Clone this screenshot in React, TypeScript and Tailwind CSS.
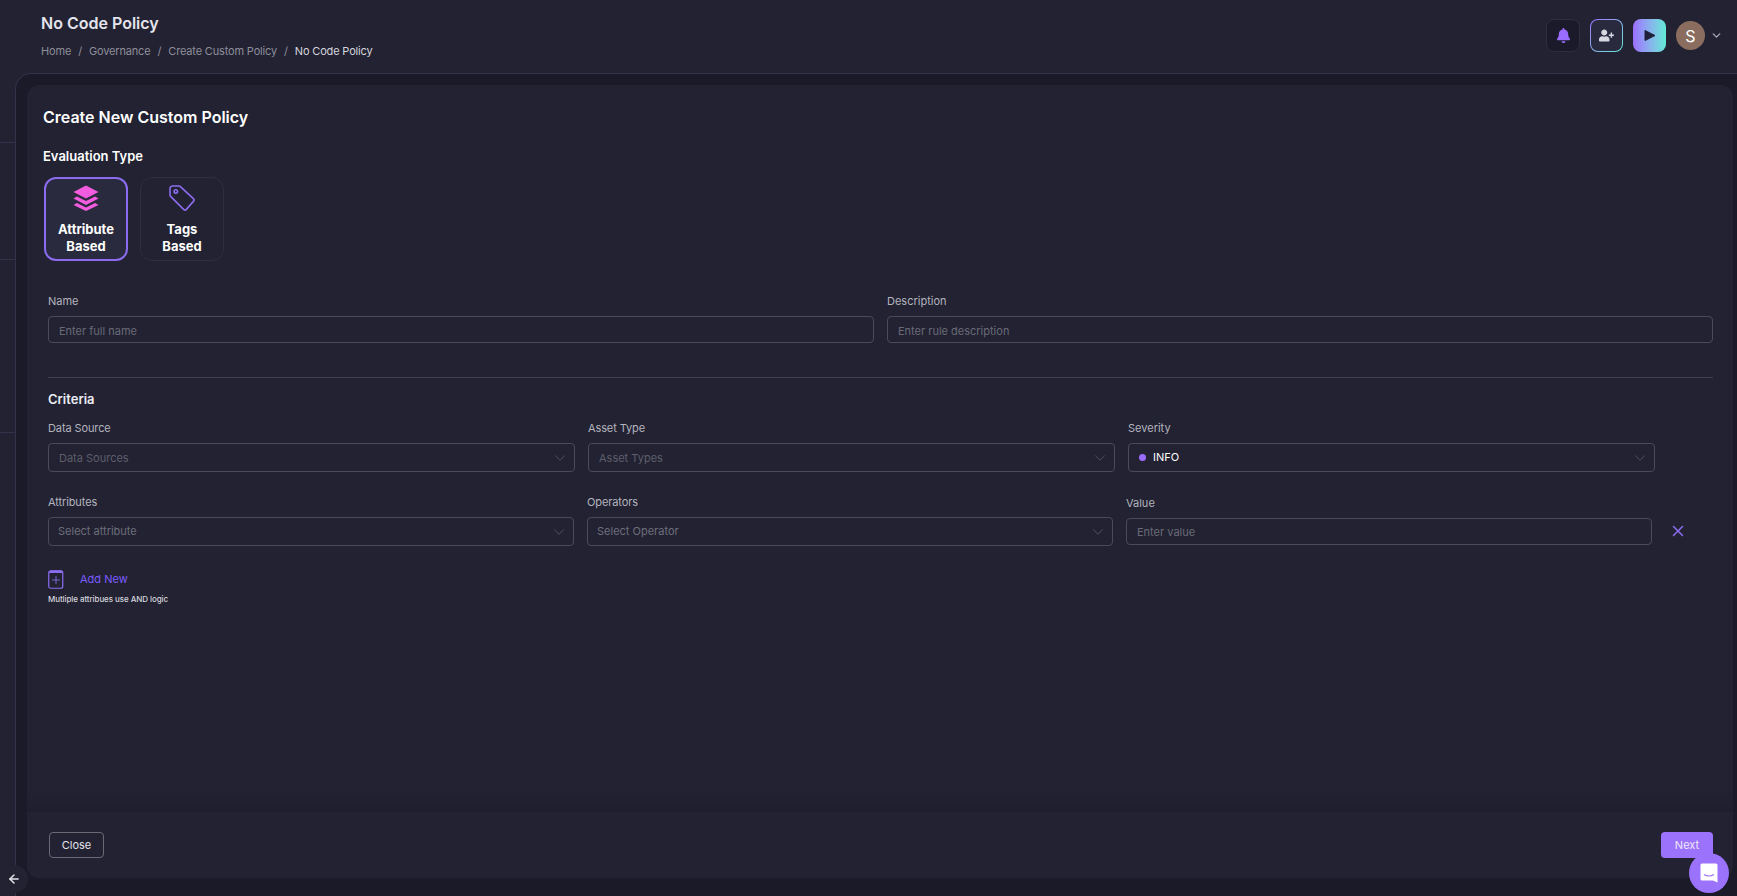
import { ChevronDown, X, ArrowLeft } from 'lucide-react'
import { FaBell, FaUserPlus } from 'react-icons/fa'

const font = { fontFamily: 'Inter, "Noto Sans", sans-serif' }

function Field({ label, placeholder, width, labelClass = '', nudge = 'pt-[2px]' }: { label: string; placeholder: string; width: string; labelClass?: string; nudge?: string }) {
  return (
    <div className={width}>
      <div className={`text-[11px] leading-4 text-[#b4b4bd] mb-[7px] ${labelClass}`}>{label}</div>
      <div className={`h-[27px] rounded border border-[#4a4a58] px-[10px] ${nudge} flex items-center text-[11px] text-[#6a6a76]`}>{placeholder}</div>
    </div>
  )
}

function SelectBox({ label, placeholder, width, indent = 'pl-[10px]', tone = 'text-[#6e6e7a]', nudge = 'pt-px' }: { label: string; placeholder: string; width: string; indent?: string; tone?: string; nudge?: string }) {
  return (
    <div className={width}>
      <div className="text-[11px] leading-4 tracking-[-0.01em] text-[#b4b4bd] mb-[7px]">{label}</div>
      <div className={`h-[29px] rounded border border-[#4a4a58] ${indent} pr-[5px] flex items-center justify-between text-[11px] ${tone}`}>
        <span className={nudge}>{placeholder}</span>
        <ChevronDown size={18} strokeWidth={0.9} className="mt-px text-[#686874]" />
      </div>
    </div>
  )
}

export default function App() {
  return (
    <div style={font} className="h-screen w-full overflow-hidden bg-[#222233] flex flex-col">
      <header className="h-[73px] shrink-0 flex items-start justify-between pl-[41px] pr-[14px]">
        <div className="pt-[12px]">
          <h1 className="text-base leading-[22px] font-semibold text-[#e4e4ec]">No Code Policy</h1>
          <div className="mt-[9px] flex items-center gap-[7px] text-[11px] leading-4 tracking-[-0.015em] text-[#8e8e98]">
            <span>Home</span>
            <span>/</span>
            <span>Governance</span>
            <span>/</span>
            <span>Create Custom Policy</span>
            <span>/</span>
            <span className="text-[#d6d6dc]">No Code Policy</span>
          </div>
        </div>
        <div className="pt-[19px] flex items-start">
          <div className="w-[34px] h-[33px] rounded-lg bg-[#1a1a2a] border border-[#2e2e40] flex items-center justify-center">
            <FaBell size={15} className="text-[#9b6dff]" />
          </div>
          <div className="ml-[10px] w-[33px] h-[33px] rounded-lg p-px bg-gradient-to-br from-[#9b6dff] to-[#5eead4]">
            <div className="w-full h-full rounded-[7px] bg-[#2a2a3e] flex items-center justify-center">
              <FaUserPlus size={15} className="text-[#d8d8e0]" />
            </div>
          </div>
          <div className="ml-[10px] w-[33px] h-[33px] rounded-lg bg-gradient-to-r from-[#9b6dff] to-[#5eead4] flex items-center justify-center">
            <svg width="12" height="13" viewBox="0 0 12 13"><path d="M1 1.5 L11 6.5 L1 11.5 Z" fill="#1f2138" stroke="#1f2138" strokeWidth="1" strokeLinejoin="round" /></svg>
          </div>
          <div className="ml-[10px] mt-[2px] w-[29px] h-[29px] rounded-full bg-[#8a6d5f] flex items-center justify-center text-white text-base">S</div>
          <ChevronDown size={13} strokeWidth={2.5} className="ml-[5px] mt-[10px] text-[#a8a8b2]" />
        </div>
      </header>

      <div className="flex-1 min-h-0 flex">
        <div className="w-[15px] shrink-0">
          <div className="h-[70px] border-b border-[#32324a]" />
          <div className="h-[117px] border-b border-[#32324a]" />
          <div className="h-[173px] border-b border-[#32324a]" />
        </div>

        <div className="flex-1 min-w-0 bg-[#1a1a28] border-l border-t border-[#32324a] rounded-tl-2xl pl-[11px] pt-[11px] pr-[4px] pb-[18px]">
          <div className="h-full rounded-xl bg-[#222233] flex flex-col relative">
            <div className="flex-1 min-h-0">
              <h2 className="pl-[16px] pt-[20px] text-base leading-6 font-semibold text-white">Create New Custom Policy</h2>
              <div className="pl-[16px] mt-[17px] text-[13px] leading-5 font-semibold text-white">Evaluation Type</div>
              <div className="pl-[17px] mt-[11px] flex gap-[12px]">
                <div className="w-[84px] h-[84px] rounded-xl border-2 border-[#8b6cf0] bg-[#2a2a3e] flex flex-col items-center pt-[6px]">
                  <svg width="26" height="26" viewBox="0 0 26 26" fill="#f45ce0">
                    <path d="M13 0.5 L25.5 7 L13 13.5 L0.5 7 Z" />
                    <path d="M4 11.5 L13 16 L22 11.5 L25.5 13.5 L13 20 L0.5 13.5 Z" />
                    <path d="M4 18 L13 22.5 L22 18 L25.5 20 L13 26 L0.5 20 Z" />
                  </svg>
                  <div className="mt-[10px] text-[13px] leading-[17px] font-bold text-white text-center">Attribute<br />Based</div>
                </div>
                <div className="w-[84px] h-[84px] rounded-xl border border-[#2e2e40] flex flex-col items-center pt-[7px]">
                  <svg width="26" height="26" viewBox="0 0 26 26" fill="none" stroke="#8b6cf0" strokeWidth="1.6">
                    <path d="M3.5 1 H10 a2 2 0 0 1 1.4 .6 L24.4 13.6 a2 2 0 0 1 0 2.8 L17.4 24.4 a2 2 0 0 1 -2.8 0 L1.6 11.4 A2 2 0 0 1 1 10 V3.5 a2.5 2.5 0 0 1 2.5 -2.5 Z" />
                    <circle cx="6.8" cy="6.4" r="1.7" />
                  </svg>
                  <div className="mt-[10px] text-[13px] leading-[17px] font-bold text-white text-center">Tags<br />Based</div>
                </div>
              </div>

              <div className="pl-[21px] pr-[20px]">
                <div className="mt-[32px] grid grid-cols-2 gap-[13px]">
                  <Field label="Name" placeholder="Enter full name" width="" nudge="pt-[4px]" />
                  <Field label="Description" placeholder="Enter rule description" width="" nudge="pt-[4px]" />
                </div>
                <div className="mt-[34px] h-px bg-[#3e3e4c]" />
                <div className="mt-[12px] text-[13px] leading-[18px] font-semibold text-[#ececf2]">Criteria</div>

                <div className="mt-[12px] flex gap-[13px]">
                  <SelectBox label="Data Source" placeholder="Data Sources" width="w-[527px]" tone="text-[#5e5e6a]" />
                  <SelectBox label="Asset Type" placeholder="Asset Types" width="w-[527px]" tone="text-[#5e5e6a]" />
                  <div className="w-[527px]">
                    <div className="text-[11px] leading-4 text-[#b4b4bd] mb-[7px]">Severity</div>
                    <div className="h-[29px] rounded border border-[#4a4a58] pl-[10px] pr-[5px] flex items-center justify-between">
                      <span className="flex items-center gap-[7px] text-[11px] text-white">
                        <span className="w-[7px] h-[7px] rounded-full bg-[#9b6dff]" />
                        INFO
                      </span>
                      <ChevronDown size={18} strokeWidth={0.9} className="mt-px text-[#686874]" />
                    </div>
                  </div>
                </div>

                <div className="mt-[22px] flex gap-[13px] items-start">
                  <SelectBox label="Attributes" placeholder="Select attribute" width="w-[526px]" indent="pl-[9px]" nudge="pb-px" />
                  <SelectBox label="Operators" placeholder="Select Operator" width="w-[526px]" indent="pl-[9px]" nudge="pb-px" />
                  <div className="pt-[1px]">
                    <Field label="Value" placeholder="Enter value" width="w-[526px]" labelClass="!mb-[7px]" />
                  </div>
                  <X size={18} strokeWidth={2} className="ml-[4px] mt-[28px] text-[#8b6cf0]" />
                </div>

                <div className="mt-[24px] flex items-center gap-[16px]">
                  <svg width="16" height="19" viewBox="0 0 16 19" fill="none">
                    <rect x="0.75" y="0.75" width="14" height="17.5" rx="2" stroke="#8b6cf0" strokeWidth="1.2" />
                    <path d="M1 3 V2.5 a2 2 0 0 1 2 -2 H13 a2 2 0 0 1 2 2 V3 Z" fill="#8b6cf0" />
                    <path d="M8 6 V14 M4 10 H12" stroke="#7a62d0" strokeWidth="1" />
                  </svg>
                  <span className="text-[11px] text-[#7c5cff]">Add New</span>
                </div>
                <div className="mt-[4px] text-[8px] leading-3 font-medium tracking-[-0.01em] text-[#d6d6dc]">Mutliple attribues use AND logic</div>
              </div>
            </div>

            <div className="h-[66px] shrink-0 relative flex items-start justify-between pl-[22px] pr-[20px] pt-[20px]">
              <div className="absolute left-0 right-0 -top-[24px] h-[24px] bg-gradient-to-b from-transparent to-[#1e1e2e]" />
              <button className="w-[55px] h-[26px] rounded border border-[#6a6a74] text-[11px] text-[#e4e4ec]">Close</button>
              <button className="w-[52px] h-[26px] rounded bg-[#9b72fb] text-[11px] text-[#f0e8ff]">Next</button>
            </div>
          </div>
        </div>
      </div>

      <div className="absolute left-0 top-[865px] w-[28px] h-[28px] rounded-full bg-[#222233] flex items-center justify-center">
        <ArrowLeft size={14} strokeWidth={2.5} className="text-[#e8e8ee]" />
      </div>
      <div className="absolute left-[1689px] top-[853px] w-[40px] h-[40px] rounded-full bg-[#9b72fb] flex items-center justify-center">
        <svg width="18" height="20" viewBox="0 0 18 20">
          <path d="M2 0.5 H16 a1.5 1.5 0 0 1 1.5 1.5 V19.5 L13 17.5 H2 a1.5 1.5 0 0 1 -1.5 -1.5 V2 a1.5 1.5 0 0 1 1.5 -1.5 Z" fill="#ffffff" />
          <path d="M4 11.5 Q9 14.5 14 11.5" stroke="#9b72fb" strokeWidth="1.2" fill="none" />
        </svg>
      </div>
    </div>
  )
}
